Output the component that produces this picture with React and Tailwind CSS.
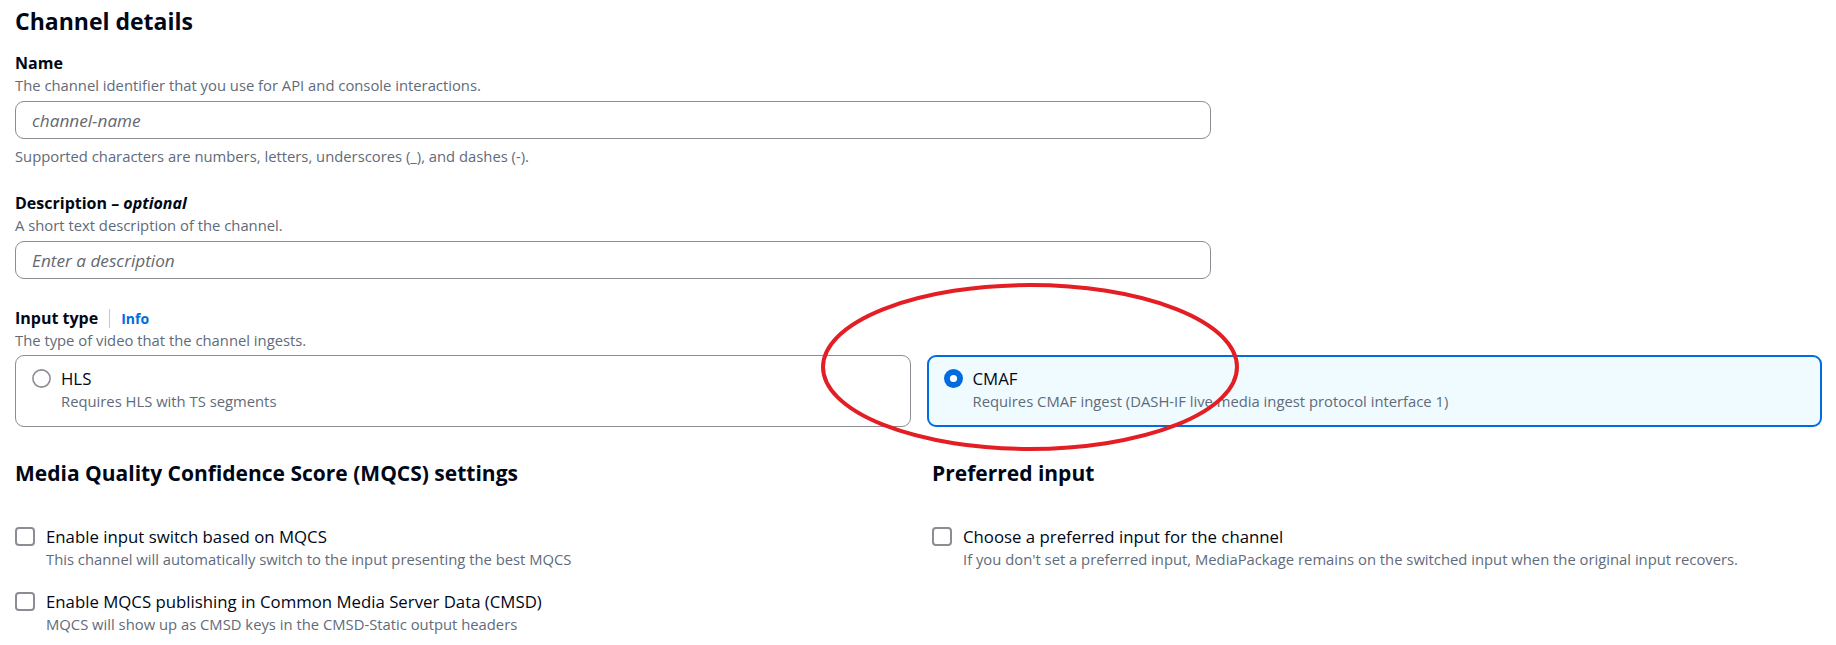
import { useState } from 'react';

const font = "font-['Open_Sans','Liberation_Sans',sans-serif]";

function Label({ children }) {
  return <div className="text-[16px] leading-[23px] font-bold text-[#000716]">{children}</div>;
}

function Hint({ children, className = '' }) {
  return <div className={`text-[14.8px] leading-[20px] text-[#5f6b7a] ${className}`}>{children}</div>;
}

function SubHint({ children }) {
  return <div className="text-[14.8px] leading-[22px] text-[#5f6b7a]">{children}</div>;
}

function TextInput({ placeholder }) {
  return (
    <input
      placeholder={placeholder}
      className="block w-full h-[38px] rounded-[9px] border border-[#8c8c94] bg-white pl-[16px] text-[17.2px] text-[#000716] outline-none placeholder:italic placeholder:text-[#656871]"
    />
  );
}

function Radio({ checked }) {
  return checked ? (
    <svg width="19" height="19" viewBox="0 0 19 19" className="shrink-0 mt-[2px]">
      <circle cx="9.5" cy="9.5" r="9.5" fill="#006ce0" />
      <circle cx="9.5" cy="9.5" r="3.6" fill="#fff" />
    </svg>
  ) : (
    <svg width="19" height="19" viewBox="0 0 19 19" className="shrink-0 mt-[2px]">
      <circle cx="9.5" cy="9.5" r="8.6" fill="#fff" stroke="#8c8c94" strokeWidth="1.6" />
    </svg>
  );
}

function Tile({ title, desc, selected, onClick }) {
  return (
    <button
      onClick={onClick}
      className={`flex items-start gap-[10px] h-[72px] rounded-[9px] text-left ${
        selected
          ? 'border-2 border-[#006ce0] bg-[#f0fbff] pl-[15px] pt-[10px]'
          : 'border border-[#8c8c94] bg-white pl-[16px] pt-[11px]'
      }`}
    >
      <Radio checked={selected} />
      <div>
        <div className="text-[16.8px] leading-[23px] text-[#000716]">{title}</div>
        <SubHint>{desc}</SubHint>
      </div>
    </button>
  );
}

function Check({ label, desc, className = '' }) {
  return (
    <label className={`flex items-start gap-[11px] ${className}`}>
      <span className="mt-[2px] w-[20px] h-[19px] shrink-0 rounded-[4px] border-2 border-[#8c8c94] bg-white" />
      <span>
        <span className="block text-[16.8px] leading-[23px] text-[#000716]">{label}</span>
        <SubHint>{desc}</SubHint>
      </span>
    </label>
  );
}

export default function App() {
  const [type, setType] = useState('cmaf');

  return (
    <div className={`relative w-full min-h-[645px] bg-white pl-[15px] pt-[7px] ${font}`}>
      <h2 className="text-[23px] leading-[28px] font-bold text-[#000716]">Channel details</h2>

      <div className="w-[1196px] mt-[17px]">
        <Label>Name</Label>
        <Hint>The channel identifier that you use for API and console interactions.</Hint>
        <div className="mt-[6px]">
          <TextInput placeholder="channel-name" />
        </div>
        <Hint className="mt-[7px]">Supported characters are numbers, letters, underscores (_), and dashes (-).</Hint>
      </div>

      <div className="w-[1196px] mt-[26px]">
        <Label>
          Description – <i>optional</i>
        </Label>
        <Hint>A short text description of the channel.</Hint>
        <div className="mt-[6px]">
          <TextInput placeholder="Enter a description" />
        </div>
      </div>

      <div className="mt-[28px]">
        <div className="flex items-center">
          <Label>Input type</Label>
          <span className="mx-[11px] w-px h-[19px] bg-[#c6c6cd]" />
          <a className="text-[14px] font-bold text-[#006ce0]">Info</a>
        </div>
        <Hint>The type of video that the channel ingests.</Hint>
        <div className="grid grid-cols-2 gap-4 w-[1807px] mt-[5px]">
          <Tile title="HLS" desc="Requires HLS with TS segments" selected={type === 'hls'} onClick={() => setType('hls')} />
          <Tile
            title="CMAF"
            desc="Requires CMAF ingest (DASH-IF live media ingest protocol interface 1)"
            selected={type === 'cmaf'}
            onClick={() => setType('cmaf')}
          />
        </div>
      </div>

      <div className="grid grid-cols-2 gap-x-[16px] w-[1818px] mt-[33px]">
        <div>
          <h3 className="text-[21px] leading-[26px] font-bold text-[#000716]">
            Media Quality Confidence Score (MQCS) settings
          </h3>
          <Check
            className="mt-[39px]"
            label="Enable input switch based on MQCS"
            desc="This channel will automatically switch to the input presenting the best MQCS"
          />
          <Check
            className="mt-[20px]"
            label="Enable MQCS publishing in Common Media Server Data (CMSD)"
            desc="MQCS will show up as CMSD keys in the CMSD-Static output headers"
          />
        </div>
        <div>
          <h3 className="text-[21px] leading-[26px] font-bold text-[#000716]">Preferred input</h3>
          <Check
            className="mt-[39px]"
            label="Choose a preferred input for the channel"
            desc="If you don't set a preferred input, MediaPackage remains on the switched input when the original input recovers."
          />
        </div>
      </div>

      {/* annotation drawn over the form */}
      <svg className="absolute left-0 top-0 pointer-events-none" width="1836" height="645">
        <ellipse cx="1030" cy="367" rx="207" ry="82" fill="none" stroke="#e31e24" strokeWidth="4" />
      </svg>
    </div>
  );
}
